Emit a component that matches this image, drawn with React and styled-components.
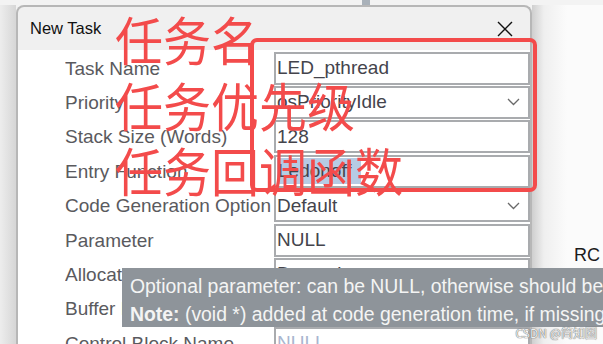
import React from "react";
import styled, { createGlobalStyle } from "styled-components";

const Global = createGlobalStyle`
  html, body { margin: 0; padding: 0; }
  body { font-family: "Liberation Sans", Arial, sans-serif; }
`;

const Page = styled.div`
  position: relative;
  width: 603px;
  height: 344px;
  overflow: hidden;
  background: #f3f3f3;
  display: flex;
  flex-direction: column;
`;

const TopStrip = styled.div`
  height: 5px;
  flex: none;
  display: flex;
`;

const BehindBlock = styled.div`
  margin-left: 362px;
  width: 8px;
  background: #a9b1b9;
`;

const Main = styled.div`
  flex: 1;
  display: flex;
  min-height: 0;
`;

const LeftGutter = styled.div`
  width: 16px;
  flex: none;
  background: linear-gradient(to right, #ededed, #d6d6d6);
`;

const Dialog = styled.div`
  width: 516px;
  flex: none;
  box-sizing: border-box;
  border: 2px solid #b7b7b7;
  border-bottom: none;
  border-radius: 8px 8px 0 0;
  background: #f0f0f0;
  display: flex;
  flex-direction: column;
  overflow: hidden;
`;

const TitleBar = styled.div`
  height: 43px;
  flex: none;
  display: flex;
  align-items: center;
  justify-content: space-between;
  padding: 0 17px 0 12px;
`;

const Title = styled.span`
  font-size: 16.5px;
  color: #111;
`;

const Body = styled.div`
  flex: 1;
  background: #fff;
  padding: 1.6px 0 0 47px;
  display: grid;
  grid-template-columns: 209px 1fr;
  grid-auto-rows: 34.4px;
`;

const Label = styled.div`
  font-size: 19px;
  line-height: 34px;
  color: #5a5a5e;
  white-space: nowrap;
  overflow: hidden;
`;

const Field = styled.div`
  height: 33px;
  box-sizing: border-box;
  border: 2px solid #a9abae;
  background: #fff;
  display: flex;
  align-items: center;
  justify-content: space-between;
  padding: 0 8px 0 1px;
  font-size: 19px;
  color: ${(p) => (p.$disabled ? "#a9b6cf" : "#44444c")};
  white-space: nowrap;
  overflow: hidden;
`;

const Selected = styled.span`
  background: #b6cbe4;
  padding: 2px 9px 2px 1px;
`;

const RightArea = styled.div`
  flex: 1;
  background: linear-gradient(to right, #cfcfcf 0px, #efefef 12px, #fbfbfb 35px);
  padding: 240px 0 0 42px;
  font-size: 18px;
  line-height: 20px;
  color: #1c1c1c;
`;

const Annotation = styled.div`
  position: absolute;
  left: 115px;
  top: ${(p) => p.$top}px;
  font-family: "Noto Sans CJK SC", "Noto Sans CJK JP", sans-serif;
  font-size: 48px;
  line-height: 48px;
  color: #f34b4b;
  white-space: nowrap;
  transform: scaleY(1.1);
  z-index: 3;
`;

const RedFrame = styled.div`
  position: absolute;
  left: 250px;
  top: 38px;
  width: 287px;
  height: 154px;
  box-sizing: border-box;
  border: 4.5px solid #f34b4b;
  border-radius: 7px;
  z-index: 2;
`;

const Tooltip = styled.div`
  position: absolute;
  left: 122px;
  top: 268px;
  width: 520px;
  height: 59px;
  box-sizing: border-box;
  background: #8e949a;
  color: #f4f4f4;
  font-size: 19.4px;
  line-height: 28px;
  padding: 4px 0 0 8px;
  white-space: nowrap;
  z-index: 4;
`;

const Bold = styled.b`
  font-weight: bold;
`;

const Watermark = styled.div`
  position: absolute;
  right: 6px;
  bottom: 5px;
  font-family: "Noto Sans CJK SC", sans-serif;
  font-size: 12px;
  line-height: 13px;
  color: #eeeeee;
  text-shadow: 0 0 1px #666, 0 0 1px #666;
  z-index: 5;
`;

const CloseIcon = () => (
  <svg width="16" height="16" viewBox="0 0 16 16">
    <path d="M1 1 L15 15 M15 1 L1 15" stroke="#111" strokeWidth="1.4" fill="none" />
  </svg>
);

const Chevron = () => (
  <svg width="13" height="8" viewBox="0 0 13 8">
    <polyline points="1,1 6.5,6.5 12,1" stroke="#6a6a6a" strokeWidth="1.3" fill="none" />
  </svg>
);

const rows = [
  { label: "Task Name", value: "LED_pthread" },
  { label: "Priority", value: "osPriorityIdle", select: true },
  { label: "Stack Size (Words)", value: "128" },
  { label: "Entry Function", value: "Ledonoff", selected: true },
  { label: "Code Generation Option", value: "Default", select: true },
  { label: "Parameter", value: "NULL" },
  { label: "Allocation", value: "Dynamic", select: true },
  { label: "Buffer Name", value: "NULL", disabled: true },
  { label: "Control Block Name", value: "NULL", disabled: true },
];

export default function App() {
  return (
    <>
      <Global />
      <Page>
        <TopStrip>
          <BehindBlock />
        </TopStrip>
        <Main>
          <LeftGutter />
          <Dialog>
            <TitleBar>
              <Title>New Task</Title>
              <CloseIcon />
            </TitleBar>
            <Body>
              {rows.map((r) => (
                <React.Fragment key={r.label}>
                  <Label>{r.label}</Label>
                  <Field $disabled={r.disabled}>
                    {r.selected ? <Selected>{r.value}</Selected> : <span>{r.value}</span>}
                    {r.select && <Chevron />}
                  </Field>
                </React.Fragment>
              ))}
            </Body>
          </Dialog>
          <RightArea>RC</RightArea>
        </Main>

        <RedFrame />
        <Annotation $top={14}>任务名</Annotation>
        <Annotation $top={80}>任务优先级</Annotation>
        <Annotation $top={145}>任务回调函数</Annotation>

        <Tooltip>
          <div>Optional parameter: can be NULL, otherwise should be</div>
          <div>
            <Bold>Note:</Bold> (void *) added at code generation time, if missing
          </div>
        </Tooltip>
        <Watermark>CSDN @简知圈</Watermark>
      </Page>
    </>
  );
}
